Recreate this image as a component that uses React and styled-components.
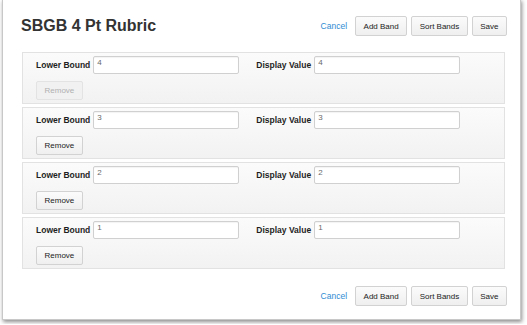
import React from "react";
import styled, { createGlobalStyle } from "styled-components";

const GlobalStyle = createGlobalStyle`
    html, body {
        margin: 0;
        padding: 0;
        background: #ffffff;
        font-family: "Liberation Sans", Arial, Helvetica, sans-serif;
    }
`;

const bands = [
    { lower: "4", display: "4", locked: true },
    { lower: "3", display: "3" },
    { lower: "2", display: "2" },
    { lower: "1", display: "1" },
];

const Page = styled.div`
    padding: 0 6px 0 2px;
    height: 325px;
    box-sizing: border-box;
`;

const Dialog = styled.div`
    width: 519px;
    height: 321px;
    margin-top: -1px;
    box-sizing: border-box;
    border: 1px solid #c8c8c8;
    background: #ffffff;
    box-shadow: 1px 2px 4px rgba(0, 0, 0, 0.45);
    display: flex;
    flex-direction: column;
`;

const Header = styled.div`
    display: flex;
    align-items: center;
    justify-content: space-between;
    padding: 16px 13px 0 18px;
`;

const Title = styled.h1`
    margin: 0;
    font-size: 16px;
    font-weight: bold;
    color: #333333;
`;

const Actions = styled.div`
    display: flex;
    align-items: center;
    gap: 4px;
    justify-content: flex-end;
    padding: ${(p) => (p.$footer ? "17px 13px 0 0" : "0")};
`;

const CancelLink = styled.a`
    font-size: 8.5px;
    color: #2f8bd3;
    text-decoration: none;
    margin-right: 4px;
    cursor: pointer;
`;

const Button = styled.button`
    height: 20px;
    padding: 0 7.5px;
    font-family: "Liberation Sans", Arial, sans-serif;
    font-size: 8px;
    color: ${(p) => (p.disabled ? "#b0b0b0" : "#222222")};
    background: ${(p) =>
        p.disabled ? "#f1f1f1" : "linear-gradient(#fbfbfb, #efefef)"};
    border: 1px solid ${(p) => (p.disabled ? "#e3e3e3" : "#d2d2d2")};
    border-radius: 2px;
    cursor: ${(p) => (p.disabled ? "default" : "pointer")};
`;

const BandList = styled.div`
    display: flex;
    flex-direction: column;
    gap: 3px;
    margin: 16px 15px 0 19px;
`;

const Band = styled.div`
    height: 52px;
    box-sizing: border-box;
    padding: 3px 13px;
    border: 1px solid #e2e2e2;
    background: linear-gradient(#fbfbfb, #f2f2f2);
    display: flex;
    flex-direction: column;
    align-items: flex-start;
    gap: 7px;
`;

const FieldRow = styled.div`
    display: flex;
    align-items: center;
    gap: 17px;
`;

const Field = styled.label`
    display: flex;
    align-items: center;
    gap: 3px;
`;

const Label = styled.span`
    font-size: 8.5px;
    font-weight: bold;
    color: #1e1e1e;
`;

const Input = styled.input`
    width: 146px;
    height: 18px;
    box-sizing: border-box;
    padding: 0 3px 5px;
    font-family: "Liberation Sans", Arial, sans-serif;
    font-size: 8px;
    color: #6a6a6a;
    background: #ffffff;
    border: 1px solid #d0d0d0;
    border-radius: 2px;
    box-shadow: inset 0 1px 1px rgba(0, 0, 0, 0.05);
    outline: none;
`;

const RemoveButton = styled(Button)`
    height: 19px;
`;

const ActionButtons = ({ footer }) => (
    <Actions $footer={footer}>
        <CancelLink>Cancel</CancelLink>
        <Button>Add Band</Button>
        <Button>Sort Bands</Button>
        <Button>Save</Button>
    </Actions>
);

export default function App() {
    return (
        <Page>
            <GlobalStyle />
            <Dialog>
                <Header>
                    <Title>SBGB 4 Pt Rubric</Title>
                    <ActionButtons />
                </Header>
                <BandList>
                    {bands.map((band) => (
                        <Band key={band.lower}>
                            <FieldRow>
                                <Field>
                                    <Label>Lower Bound</Label>
                                    <Input defaultValue={band.lower} />
                                </Field>
                                <Field>
                                    <Label>Display Value</Label>
                                    <Input defaultValue={band.display} />
                                </Field>
                            </FieldRow>
                            <RemoveButton disabled={band.locked}>Remove</RemoveButton>
                        </Band>
                    ))}
                </BandList>
                <ActionButtons footer />
            </Dialog>
        </Page>
    );
}
